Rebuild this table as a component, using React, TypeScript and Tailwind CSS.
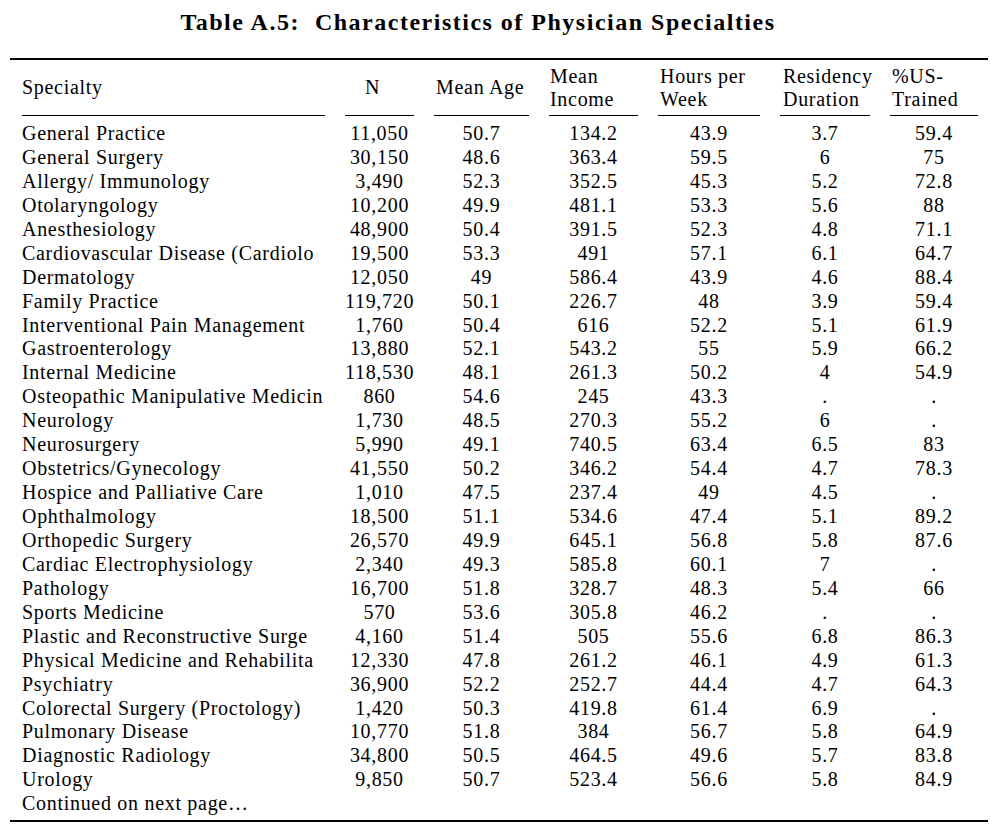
const rows: string[][] = [
  ["General Practice", "11,050", "50.7", "134.2", "43.9", "3.7", "59.4"],
  ["General Surgery", "30,150", "48.6", "363.4", "59.5", "6", "75"],
  ["Allergy/ Immunology", "3,490", "52.3", "352.5", "45.3", "5.2", "72.8"],
  ["Otolaryngology", "10,200", "49.9", "481.1", "53.3", "5.6", "88"],
  ["Anesthesiology", "48,900", "50.4", "391.5", "52.3", "4.8", "71.1"],
  ["Cardiovascular Disease (Cardiolo", "19,500", "53.3", "491", "57.1", "6.1", "64.7"],
  ["Dermatology", "12,050", "49", "586.4", "43.9", "4.6", "88.4"],
  ["Family Practice", "119,720", "50.1", "226.7", "48", "3.9", "59.4"],
  ["Interventional Pain Management", "1,760", "50.4", "616", "52.2", "5.1", "61.9"],
  ["Gastroenterology", "13,880", "52.1", "543.2", "55", "5.9", "66.2"],
  ["Internal Medicine", "118,530", "48.1", "261.3", "50.2", "4", "54.9"],
  ["Osteopathic Manipulative Medicin", "860", "54.6", "245", "43.3", ".", "."],
  ["Neurology", "1,730", "48.5", "270.3", "55.2", "6", "."],
  ["Neurosurgery", "5,990", "49.1", "740.5", "63.4", "6.5", "83"],
  ["Obstetrics/Gynecology", "41,550", "50.2", "346.2", "54.4", "4.7", "78.3"],
  ["Hospice and Palliative Care", "1,010", "47.5", "237.4", "49", "4.5", "."],
  ["Ophthalmology", "18,500", "51.1", "534.6", "47.4", "5.1", "89.2"],
  ["Orthopedic Surgery", "26,570", "49.9", "645.1", "56.8", "5.8", "87.6"],
  ["Cardiac Electrophysiology", "2,340", "49.3", "585.8", "60.1", "7", "."],
  ["Pathology", "16,700", "51.8", "328.7", "48.3", "5.4", "66"],
  ["Sports Medicine", "570", "53.6", "305.8", "46.2", ".", "."],
  ["Plastic and Reconstructive Surge", "4,160", "51.4", "505", "55.6", "6.8", "86.3"],
  ["Physical Medicine and Rehabilita", "12,330", "47.8", "261.2", "46.1", "4.9", "61.3"],
  ["Psychiatry", "36,900", "52.2", "252.7", "44.4", "4.7", "64.3"],
  ["Colorectal Surgery (Proctology)", "1,420", "50.3", "419.8", "61.4", "6.9", "."],
  ["Pulmonary Disease", "10,770", "51.8", "384", "56.7", "5.8", "64.9"],
  ["Diagnostic Radiology", "34,800", "50.5", "464.5", "49.6", "5.7", "83.8"],
  ["Urology", "9,850", "50.7", "523.4", "56.6", "5.8", "84.9"],
];

const cols = "grid grid-cols-[303px_69px_95px_89px_102px_90px_88px] gap-x-[20px] pl-[12px]";

export default function App() {
  return (
    <div className="w-[998px] h-[828px] bg-white text-black overflow-hidden font-['Liberation_Serif','Times_New_Roman',serif]">
      <h1 className="pt-[6px] pr-[42px] text-center text-[24px] leading-[32px] font-bold tracking-[1.5px]">
        Table A.5:&nbsp;&nbsp;Characteristics of Physician Specialties
      </h1>

      <div className="mx-[10px] mt-[20px] border-t-2 border-black text-[20px] tracking-[0.7px]">
        <div className={`${cols} h-[55px] items-center leading-[23px]`}>
          <div>Specialty</div>
          <div className="text-center pr-[14px]">N</div>
          <div className="pl-[2px]">Mean Age</div>
          <div className="pl-[1px]">Mean<br />Income</div>
          <div className="pl-[2px]">Hours per<br />Week</div>
          <div className="pl-[3px]">Residency<br />Duration</div>
          <div className="pl-[2px]">%US-<br />Trained</div>
        </div>
        <div className={cols}>
          <div className="h-px bg-black" />
          <div className="h-px bg-black" />
          <div className="h-px bg-black" />
          <div className="h-px bg-black" />
          <div className="h-px bg-black" />
          <div className="h-px bg-black" />
          <div className="h-px bg-black" />
        </div>

        <div className="pt-[6px] leading-[23.93px]">
          {rows.map((r) => (
            <div key={r[0]} className={cols}>
              <div className="whitespace-nowrap">{r[0]}</div>
              {r.slice(1).map((v, i) => (
                <div key={i} className="text-center">
                  {v}
                </div>
              ))}
            </div>
          ))}
          <div className="pl-[12px]">Continued on next page…</div>
        </div>
        <div className="mt-[4px] border-t-2 border-black" />
      </div>
    </div>
  );
}
